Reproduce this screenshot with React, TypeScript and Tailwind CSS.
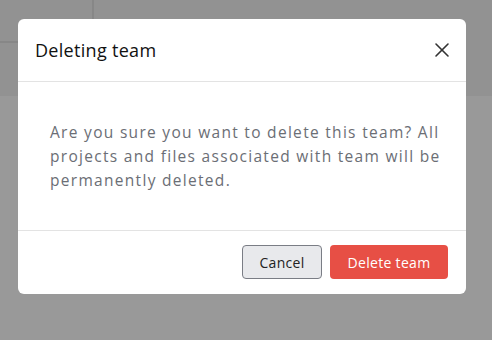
import { X } from "lucide-react";

export default function App() {
  return (
    <div className="relative h-[340px] w-[492px] overflow-hidden bg-white font-['Open_Sans',sans-serif]">
      {/* page behind the overlay */}
      <div className="flex h-[96px] bg-[#f4f4f4]">
        <div className="h-[43px] w-[94px] border-r-2 border-b-2 border-[#e2e2e2]" />
        <div className="flex-1" />
      </div>

      {/* overlay */}
      <div className="absolute inset-0 bg-black/40" />

      <div className="absolute top-[19px] left-[18px] w-[448px] rounded-md bg-white">
        <div className="flex h-[63px] items-center justify-between border-b border-[#e3e3e3] pr-3 pl-[17px]">
          <h2 className="text-[18px] tracking-[0.3px] text-[#111]">Deleting team</h2>
          <button type="button" className="text-[#333]">
            <X size={24} strokeWidth={1.6} />
          </button>
        </div>

        <div className="border-b border-[#e3e3e3] pt-[38px] pr-4 pb-[38px] pl-8">
          <p className="text-[15.5px] leading-6 tracking-[1.3px] text-[#6b6e75]">
            Are you sure you want to delete this team? All projects and files
            associated with team will be permanently deleted.
          </p>
        </div>

        <div className="flex justify-end gap-2 px-[18px] pt-[14px] pb-[15px]">
          <button
            type="button"
            className="h-[34px] w-[80px] rounded border border-[#7a7d85] bg-[#e8e9ec] text-[14px] tracking-[0.3px] text-[#222]"
          >
            Cancel
          </button>
          <button
            type="button"
            className="h-[34px] w-[118px] rounded bg-[#e74f45] text-[14px] tracking-[0.3px] text-white"
          >
            Delete team
          </button>
        </div>
      </div>
    </div>
  );
}
